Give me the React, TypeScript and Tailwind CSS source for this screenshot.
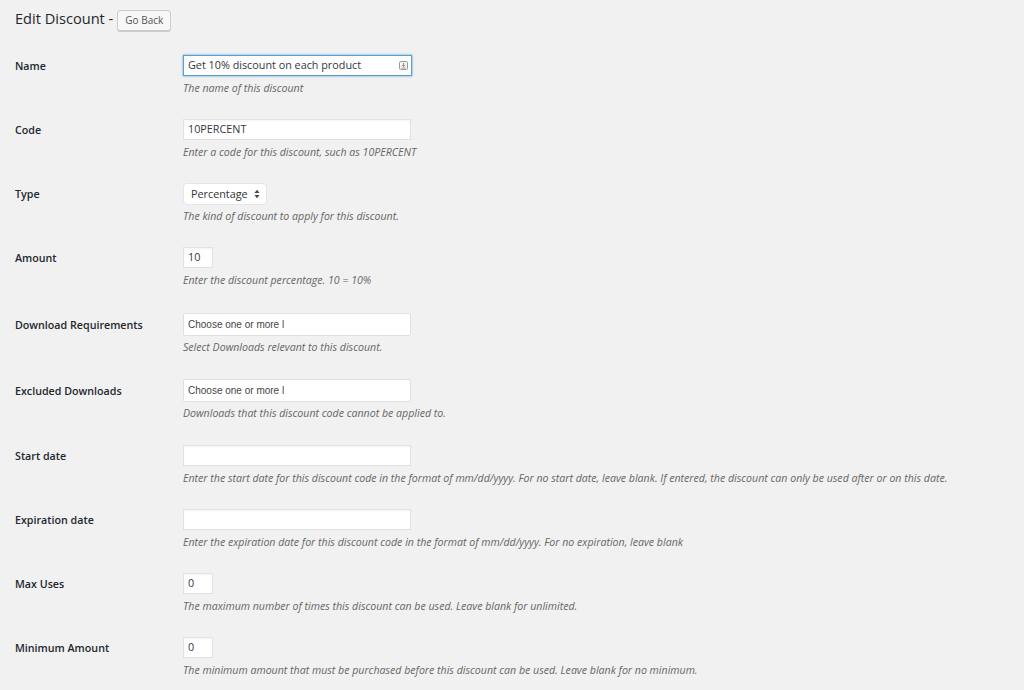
import React from "react";

function Row({
  label,
  children,
  desc,
  labelCls = "h-[21px]",
  descCls = "mt-[5px]",
  rowCls = "mb-[24px]",
}: {
  label: string;
  children: React.ReactNode;
  desc: string;
  labelCls?: string;
  descCls?: string;
  rowCls?: string;
}) {
  return (
    <div className={"flex " + rowCls}>
      <div
        className={
          "w-[168px] shrink-0 flex items-center pt-[1px] text-[10.7px] font-semibold text-[#23282d] " +
          labelCls
        }
      >
        {label}
      </div>
      <div>
        {children}
        <p className={"text-[10.6px] italic leading-[14px] text-[#666] " + descCls}>{desc}</p>
      </div>
    </div>
  );
}

function TextBox({ value, wide, focus }: { value?: string; wide?: boolean; focus?: boolean }) {
  return (
    <div
      className={
        "h-[21px] bg-white flex items-center px-[4px] text-[10.8px] text-[#32373c] relative " +
        (wide ? (focus ? "w-[229px] " : "w-[228px] ") : "w-[30px] ") +
        (focus
          ? "border border-[#5b9dd9] shadow-[0_0_2px_rgba(30,140,190,0.8)]"
          : "border border-[#e2e2e2] shadow-[inset_0_1px_2px_rgba(0,0,0,0.05)]")
      }
    >
      <span>{value}</span>
      {focus && (
        <svg className="absolute right-[3px] top-[5px]" width="9" height="9" viewBox="0 0 9 9">
          <rect x="0.5" y="0.5" width="8" height="8" rx="1" fill="#f4f4f4" stroke="#9a9a9a" />
          <path d="M4.5 2v3.2M3 4l1.5 1.5L6 4M2.5 7h4" stroke="#8a8a8a" strokeWidth="0.9" fill="none" />
        </svg>
      )}
    </div>
  );
}

function Chosen() {
  return (
    <div className="w-[228px] h-[23px] bg-white border border-[#e0e0e0] rounded-[2px] flex items-center px-[4px] text-[10px] text-[#444] font-['Liberation_Sans',Arial,sans-serif]">
      Choose one or more l
    </div>
  );
}

export default function App() {
  return (
    <div className="min-h-[690px] w-[1024px] bg-[#f1f1f1] px-[15px] pt-[10px] font-['Open_Sans','Noto_Sans',sans-serif]">
      <div className="flex items-center h-[21px] mb-[24px]">
        <h1 className="text-[14.6px] text-[#23282d] leading-none mr-[4px] mb-[4px]">Edit Discount -</h1>
        <button className="h-[21px] w-[54px] text-[10px] text-[#555] bg-[#f7f7f7] border border-[#cccccc] rounded-[3px] shadow-[0_1px_0_#ccc]">
          Go Back
        </button>
      </div>

      <Row label="Name" desc="The name of this discount">
        <TextBox value="Get 10% discount on each product" wide focus />
      </Row>
      <Row label="Code" desc="Enter a code for this discount, such as 10PERCENT">
        <TextBox value="10PERCENT" wide />
      </Row>
      <Row
        label="Type"
        desc="The kind of discount to apply for this discount."
        labelCls="h-[22px]"
        descCls="mt-[4px]"
      >
        <div className="w-[84px] h-[22px] bg-white border border-[#e6e6e6] rounded-[4px] flex items-center justify-between pl-[7px] pr-[6px] text-[10.8px] text-[#333]">
          <span>Percentage</span>
          <svg width="6" height="10" viewBox="0 0 6 10">
            <path d="M0.5 4L3 0.8 5.5 4z" fill="#444" />
            <path d="M0.5 6L3 9.2 5.5 6z" fill="#444" />
          </svg>
        </div>
      </Row>
      <Row label="Amount" desc="Enter the discount percentage. 10 = 10%" rowCls="mb-[26px]">
        <TextBox value="10" />
      </Row>
      <Row
        label="Download Requirements"
        desc="Select Downloads relevant to this discount."
        labelCls="h-[23px]"
        descCls="mt-[4px]"
        rowCls="mb-[25px]"
      >
        <Chosen />
      </Row>
      <Row
        label="Excluded Downloads"
        desc="Downloads that this discount code cannot be applied to."
        labelCls="h-[23px]"
        descCls="mt-[4px]"
        rowCls="mb-[25px]"
      >
        <Chosen />
      </Row>
      <Row
        label="Start date"
        desc="Enter the start date for this discount code in the format of mm/dd/yyyy. For no start date, leave blank. If entered, the discount can only be used after or on this date."
      >
        <TextBox wide />
      </Row>
      <Row
        label="Expiration date"
        desc="Enter the expiration date for this discount code in the format of mm/dd/yyyy. For no expiration, leave blank"
      >
        <TextBox wide />
      </Row>
      <Row label="Max Uses" desc="The maximum number of times this discount can be used. Leave blank for unlimited.">
        <TextBox value="0" />
      </Row>
      <Row
        label="Minimum Amount"
        desc="The minimum amount that must be purchased before this discount can be used. Leave blank for no minimum."
      >
        <TextBox value="0" />
      </Row>
    </div>
  );
}
